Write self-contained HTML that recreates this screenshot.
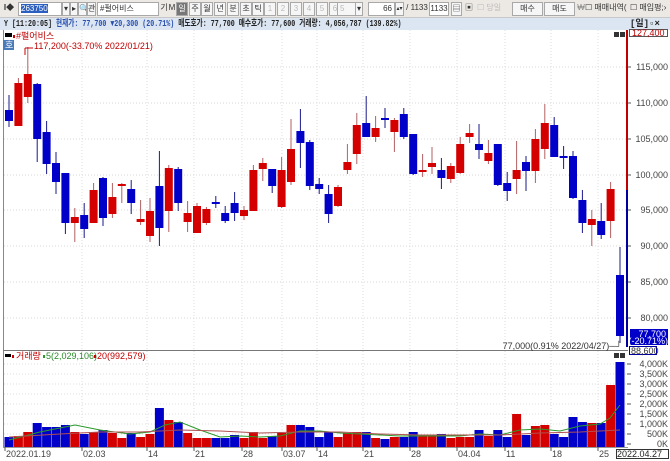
<!DOCTYPE html>
<html><head><meta charset="utf-8">
<style>
*{margin:0;padding:0;box-sizing:border-box}
body{width:670px;height:461px;overflow:hidden;background:#fff;font-family:"Liberation Sans","Noto Sans CJK KR",sans-serif;font-size:9px;position:relative}
.tb{position:absolute;left:0;top:0;width:670px;height:18px;background:#ece9e4;border-bottom:1px solid #c8c8c8}
.a{position:absolute;top:2px;height:14px;line-height:12px;font-size:8px;text-align:center;border:1px solid #a8a8a8;background:#f6f6f6;color:#333;overflow:hidden;white-space:nowrap}
.g{color:#bbb}
.r2{position:absolute;left:0;top:18px;width:670px;height:12px;background:#dce6f2;font-family:"Liberation Mono","Noto Sans CJK KR",monospace;font-size:9px;line-height:12px;font-weight:bold;color:#222;white-space:nowrap}
.r2 .sq{display:inline-block;transform:scaleX(0.74);transform-origin:0 0}
svg{position:absolute;left:0;top:0}
</style></head><body>
<div class="tb">
 <div class="a" style="left:1px;width:16px;border:none;background:none;font-weight:bold">I◆</div>
 <div class="a" style="left:18px;width:44px;background:#fff;text-align:left;padding-left:2px"><span style="background:#2a5fbf;color:#fff">263750</span></div>
 <div class="a" style="left:62px;width:8px">▾</div>
 <div class="a" style="left:70px;width:8px">▸</div>
 <div class="a" style="left:78px;width:9px">🔍</div>
 <div class="a" style="left:87px;width:9px">관</div>
 <div class="a" style="left:97px;width:62px;background:#fff;text-align:left;padding-left:2px">#펄어비스</div>
 <div class="a" style="left:160px;width:8px;border:none;background:none">기</div>
 <div class="a" style="left:168px;width:8px;border:none;background:none">M</div>
 <div class="a" style="left:176px;width:12px;background:#777;color:#fff">일</div>
 <div class="a" style="left:189px;width:12px">주</div>
 <div class="a" style="left:201px;width:12px">월</div>
 <div class="a" style="left:214px;width:12px">년</div>
 <div class="a" style="left:227px;width:12px">분</div>
 <div class="a" style="left:240px;width:12px">초</div>
 <div class="a" style="left:252px;width:12px">틱</div>
 <div class="a g" style="left:264px;width:12px">1</div>
 <div class="a g" style="left:277px;width:12px">2</div>
 <div class="a g" style="left:290px;width:12px">3</div>
 <div class="a g" style="left:303px;width:12px">4</div>
 <div class="a g" style="left:316px;width:12px">5</div>
 <div class="a g" style="left:329px;width:12px">6</div>
 <div class="a g" style="left:337px;width:24px;text-align:left;padding-left:2px">5</div>
 <div class="a" style="left:355px;width:8px">▾</div>
 <div class="a" style="left:368px;width:27px;background:#fff;text-align:right;padding-right:2px">66</div>
 <div class="a" style="left:395px;width:9px;font-size:6px">▴▾</div>
 <div class="a" style="left:406px;width:22px;border:none;background:none">/ 1133</div>
 <div class="a" style="left:429px;width:20px;background:#fff">1133</div>
 <div class="a" style="left:451px;width:11px">▤</div>
 <div class="a" style="left:464px;width:10px;border:none;background:none">▣</div>
 <div class="a g" style="left:477px;width:32px;border:none;background:none;text-align:left">☐ 당일</div>
 <div class="a" style="left:512px;width:31px">매수</div>
 <div class="a" style="left:544px;width:31px">매도</div>
 <div class="a" style="left:577px;width:8px;border:none;background:none;color:#888">₩</div>
 <div class="a" style="left:585px;width:46px;border:none;background:none;text-align:left">☐ 매매내역(</div>
 <div class="a" style="left:630px;width:40px;border:none;background:none;text-align:left">☐ 매입평;›</div>
</div>
<div class="r2"><span class="sq">&nbsp;Y [11:20:05] <span style="color:#2850b0">현재가: 77,700 ▼20,300 (20.71%)</span> 매도호가: 77,700 매수호가: 77,600 거래량: 4,056,787 (139.82%)</span><span style="position:absolute;left:630px">[일]▫×</span></div>
<svg id="s" width="670" height="461"></svg>
<script>
var s=document.getElementById('s'),h='';
function L(x1,y1,x2,y2,c,w,d){h+='<line x1="'+x1+'" y1="'+y1+'" x2="'+x2+'" y2="'+y2+'" stroke="'+c+'" stroke-width="'+(w||1)+'"'+(d?' stroke-dasharray="1,2"':'')+'/>';}
function R(x,y,w,hh,c){h+='<rect x="'+x+'" y="'+y+'" width="'+w+'" height="'+hh+'" fill="'+c+'"/>';}
function T(x,y,t,c,a){h+='<text x="'+x+'" y="'+y+'" fill="'+(c||'#333')+'" font-size="9" font-family="Liberation Sans,Noto Sans CJK KR,sans-serif"'+(a?' text-anchor="'+a+'"':'')+'>'+t+'</text>';}
R(0,30,670,431,'#fff');
L(3.5,30,3.5,448,'#888');L(3,350.5,628,350.5,'#777');L(3,447.5,628,447.5,'#999');
var py=[67,103,139,175,210,246,282,318],pl=['115,000','110,000','105,000','100,000','95,000','90,000','85,000','80,000'];
py.forEach(function(y,i){L(4,y,626,y,'#d8d8d8',1,1);L(627,y,631,y,'#555');T(668,y+3,pl[i],'#444','end');});
var vy=[364,374,384,394,404,414,424,434,444],vl=['4,000K','3,500K','3,000K','2,500K','2,000K','1,500K','1,000K','500K','0K'];
vy.forEach(function(y,i){if(i<8)L(4,y,626,y,'#dcdcdc',1,1);L(627,y,631,y,'#555');T(668,y+3,vl[i],'#444','end');});
var dx=[5,82,147,194,242,282,317,363,410,457,505,551,598],dl=['2022.01.19','02.03','14','21','28','03.07','14','21','28','04.04','11','18','25'];
dx.forEach(function(x,i){if(i>0){L(x,30,x,447,'#dcdcdc',1,1);}L(x,447,x,451,'#555');T(x+1,457,dl[i],'#444');});
var c=[['b',110,121,95,127],['r',83,126,78,126],['r',74,97,47,103],['b',84,139,83,162],['b',132,164,121,174],['b',163,182,152,194],['b',173,223,173,234],['r',217,223,208,242],['b',215,229,203,238],['r',190,223,183,223],['b',178,218,177,226],['r',197,214,183,218],['r',184,186,183,203],['b',189,203,180,214],['r',219,222,200,225],['r',211,236,198,242],['b',186,228,151,246],['r',168,211,165,232],['b',169,203,167,211],['r',213,222,201,232],['r',206,233,203,233],['r',209,223,207,225],['b',202,203,196,208],['b',213,221,206,223],['b',203,213,192,221],['r',210,216,206,220],['r',170,211,165,211],['r',163,169,158,181],['b',169,186,169,193],['r',170,207,157,208],['r',149,182,119,185],['b',131,143,109,168],['b',142,186,140,190],['b',184,189,178,194],['b',194,214,185,223],['r',187,206,185,207],['r',162,170,144,174],['r',125,154,113,164],['b',123,137,96,137],['r',128,137,116,142],['b',118,120,108,128],['r',120,132,118,152],['b',114,137,108,139],['b',134,174,134,175],['r',170,172,154,177],['r',163,167,147,174],['b',170,178,158,189],['r',166,179,163,183],['r',144,173,137,174],['r',133,137,124,143],['b',144,150,124,159],['r',153,161,140,164],['b',144,185,144,186],['b',183,191,172,201],['r',170,179,141,194],['b',162,171,156,191],['r',139,171,129,183],['r',123,149,104,159],['b',125,157,117,157],['b',156,158,146,169],['b',156,198,151,199],['b',200,223,190,233],['r',219,225,210,246],['b',221,235,203,239],['r',189,221,182,238],['b',275,336,247,343]];
c.forEach(function(d,i){var x=9+i*9.4,col=d[0]=='r'?'#d40000':'#0000c8';L(x,d[3],x,d[4],d[0]=='r'?'#b06060':'#1a1a8a');R(x-4,d[1],8,Math.max(2,d[2]-d[1]),col);});
var v=[['b',437],['r',436],['r',432],['b',423],['b',427],['b',427],['b',425],['r',432],['b',434],['r',432],['b',430],['r',433],['r',438],['b',433],['r',437],['r',434],['b',408],['r',420],['b',422],['r',433],['r',438],['r',438],['b',438],['b',438],['b',435],['r',438],['r',432],['r',438],['b',436],['r',433],['r',425],['b',425],['b',427],['b',437],['b',432],['r',437],['r',433],['r',432],['b',432],['r',438],['b',439],['r',437],['b',437],['b',432],['r',436],['r',436],['b',434],['r',438],['r',437],['r',437],['b',430],['r',436],['b',430],['b',437],['r',414],['b',435],['r',426],['r',425],['b',434],['b',437],['b',417],['b',422],['r',423],['b',423],['r',385],['b',362]];
v.forEach(function(d,i){var x=9+i*9.4;R(x-4.5,d[1],9,447-d[1],d[0]=='r'?'#d40000':'#0000c8');});
h+='<polyline fill="none" stroke="#2a9a2a" stroke-width="1" points="9,440 40,432 60,428 75,425 100,430 130,434 150,432 165,425 180,422 200,430 220,437 240,436 260,437 280,436 300,431 320,431 340,433 360,434 380,435 400,436 420,436 440,436 460,436 480,434 500,435 520,430 540,429 560,431 580,426 600,424 610,418 620,405"/>';
h+='<polyline fill="none" stroke="#b05050" stroke-width="1" points="9,437 60,434 100,432 140,432 180,430 220,431 260,433 300,432 340,432 380,434 420,435 460,435 500,435 540,433 580,432 620,430"/>';
L(627,30,627,190,'#c00000',2);L(627,190,627,347,'#0000a0',2);
h+='<rect x="629.5" y="29.5" width="38" height="7" fill="#fff" stroke="#555"/>';T(632,36,'127,400','#c00000');
R(614,32,5,5,'#333');R(620,32,5,5,'#333');R(614,353,5,5,'#333');R(620,353,5,5,'#333');
R(630,329,38,16,'#0000c8');T(666,337,'77,700','#fff','end');T(668,344,'(-20.71%)','#fff','end');
h+='<rect x="629.5" y="346.5" width="27" height="8" fill="#fff" stroke="#0000a0"/>';T(631,354,'88,600','#333');
T(622,349,'77,000(0.91% 2022/04/27)─┘','#333','end');
R(5,33,7,4,'#000');R(13,35,2,3,'#c00');T(16,39,'#펄어비스','#c00000');
R(3,40,11,10,'#4a7ab8');T(5,48,'호','#fff');
L(25,55,25,48,'#c00');L(25,48,33,48,'#c00');T(34,49,'117,200(-33.70% 2022/01/21)','#c00000');
R(5,354,6,3,'#000');R(12,355,2,3,'#c00');T(16,359,'거래량','#c00000');R(43,355,2,3,'#2a9a2a');T(46,359,'5(2,029,106)','#2a8a2a');R(94,355,2,3,'#c00');T(97,359,'20(992,579)','#c00000');
h+='<rect x="616.5" y="449.5" width="52" height="9" fill="#fff" stroke="#333"/>';T(617,457,'2022.04.27','#222');
s.innerHTML=h;
</script>
</body></html>
